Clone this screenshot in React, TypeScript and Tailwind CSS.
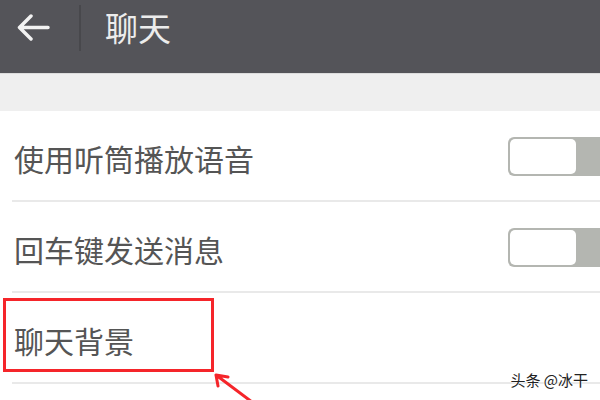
import React from 'react';

const font = { fontFamily: '"Noto Sans CJK SC", "Noto Sans", sans-serif' };

const Toggle = () => (
  <div className="flex h-[39px] w-[92px] shrink-0 items-stretch overflow-hidden rounded-l-[6px] border-2 border-r-0 border-[#b4b6b1] bg-[#b4b6b1]">
    <div className="w-[66px] rounded-[5px] bg-white" />
  </div>
);

const Row: React.FC<{ label: string; toggle?: boolean; boxed?: boolean }> = ({ label, toggle, boxed }) => (
  <div className="relative flex h-[91px] items-center justify-between pl-[14px]">
    <span className="pt-[3px] text-[30px] leading-none text-[#555555]">{label}</span>
    {toggle && <Toggle />}
    {boxed && (
      <div className="absolute left-[3px] top-[5px] h-[74px] w-[211px] border-[3px] border-[#f5252a]" />
    )}
    <div className="absolute bottom-0 left-[12px] right-0 h-[2px] bg-[#e9e9e9]" />
  </div>
);

export default function App() {
  return (
    <div className="relative h-[400px] w-[600px] overflow-hidden bg-white" style={font}>
      <header className="flex h-[73px] items-center bg-[#545459] pb-[18px]">
        <div className="flex w-[79px] pl-[17px]">
          <svg width="33" height="27" viewBox="0 0 33 27" fill="none" stroke="#f2f2f2" strokeWidth="3.5" strokeLinecap="round" strokeLinejoin="round">
            <path d="M31 13.5H3M14 2L2.5 13.5 14 25" />
          </svg>
        </div>
        <div className="h-[46px] w-[2px] bg-[#48484c]" />
        <span className="ml-[24px] text-[33px] leading-none text-[#ececec]">聊天</span>
      </header>
      <div className="h-[38px] border-t border-[#dcdcdc] bg-[#efefef]" />
      <Row label="使用听筒播放语音" toggle />
      <Row label="回车键发送消息" toggle />
      <Row label="聊天背景" boxed />
      <svg className="absolute left-[212px] top-[372px]" width="50" height="30" viewBox="0 0 50 30" fill="none" stroke="#f5252a" strokeWidth="3" strokeLinecap="round">
        <path d="M4 3L40 30M4 3l12 2M4 3l2 11" />
      </svg>
      <div className="absolute right-[12px] top-[369px] text-[15px] text-[#222]" style={{ textShadow: '0 0 2px #fff, 0 0 2px #fff' }}>
        头条 @冰干
      </div>
    </div>
  );
}
